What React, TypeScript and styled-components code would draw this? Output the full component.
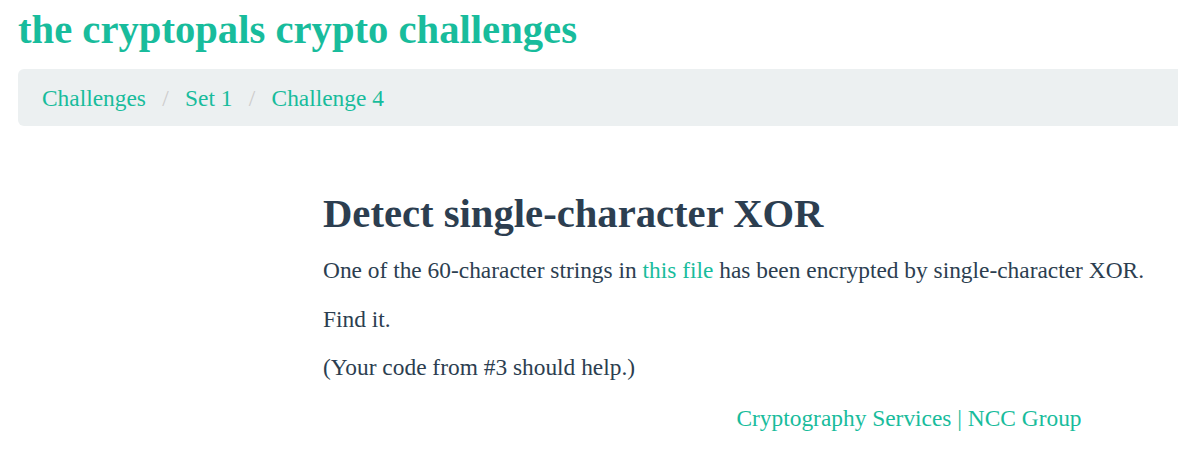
import React from 'react';
import styled, { createGlobalStyle } from 'styled-components';

const GlobalStyle = createGlobalStyle`
  html, body {
    margin: 0;
    padding: 0;
    background: #ffffff;
    overflow-x: hidden;
  }
  body {
    font-family: 'Liberation Serif', 'Times New Roman', serif;
    color: #2c3e50;
  }
`;

const green = '#18bc9c';

const Page = styled.div`
  padding: 0 0 30px 18px;
  overflow: hidden;
`;

const SiteTitle = styled.h1`
  margin: 0;
  padding-top: 7px;
  font-size: 40.66px;
  line-height: 45px;
  font-weight: bold;
  color: ${green};
`;

const Breadcrumb = styled.ol`
  list-style: none;
  display: flex;
  align-items: center;
  margin: 17px -20px 0 0;
  padding: 1px 24px 0;
  height: 56px;
  background: #ecf0f1;
  border-radius: 6px;
  font-size: 23.4px;
`;

const Crumb = styled.li`
  display: flex;
  align-items: center;

  & + &::before {
    content: '/';
    color: #cccccc;
    padding: 0 16.3px;
  }
`;

const Link = styled.a`
  color: ${green};
  text-decoration: none;
`;

const Content = styled.main`
  margin: 66px 0 0 305px;
  max-width: 860px;
`;

const Heading = styled.h2`
  margin: 0 0 17.4px;
  font-size: 40.66px;
  line-height: 44.7px;
  font-weight: bold;
  color: #2c3e50;
`;

const Para = styled.p`
  margin: 0 0 16.5px;
  font-size: 23.4px;
  line-height: 32px;
`;

const Footer = styled.footer`
  margin: 19px 0 0 305px;
  width: 1172px;
  text-align: center;
  font-size: 23.4px;
  line-height: 32px;
  color: ${green};
`;

export default function App() {
  return (
    <>
      <GlobalStyle />
      <Page>
        <SiteTitle>the cryptopals crypto challenges</SiteTitle>
        <Breadcrumb>
          <Crumb>
            <Link href="#">Challenges</Link>
          </Crumb>
          <Crumb>
            <Link href="#">Set 1</Link>
          </Crumb>
          <Crumb>
            <Link href="#">Challenge 4</Link>
          </Crumb>
        </Breadcrumb>
        <Content>
          <Heading>Detect single-character XOR</Heading>
          <Para>
            One of the 60-character strings in <Link href="#">this file</Link> has been
            encrypted by single-character XOR.
          </Para>
          <Para>Find it.</Para>
          <Para>(Your code from #3 should help.)</Para>
        </Content>
        <Footer>
          <Link href="#">Cryptography Services</Link> | <Link href="#">NCC Group</Link>
        </Footer>
      </Page>
    </>
  );
}
